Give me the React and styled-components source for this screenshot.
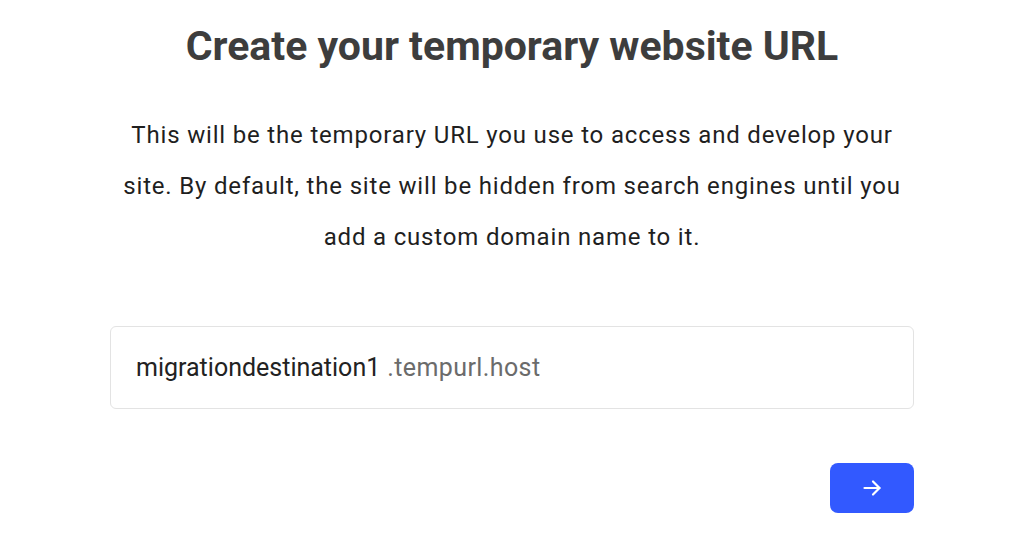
import React from "react";
import styled, { createGlobalStyle } from "styled-components";

const Global = createGlobalStyle`
  html, body { margin: 0; padding: 0; background: #fff; }
  body { font-family: Roboto, "Noto Sans", Arial, sans-serif; -webkit-font-smoothing: antialiased; }
`;

const Page = styled.main`
  width: 804px;
  margin: 0 auto;
  padding-top: 22px;
  display: flex;
  flex-direction: column;
`;

const Title = styled.h1`
  margin: 0;
  text-align: center;
  font-size: 41px;
  line-height: 48px;
  font-weight: 700;
  color: #3d3d3d;
`;

const Lead = styled.p`
  margin: 40px 0 0;
  text-align: center;
  font-size: 24px;
  line-height: 51px;
  letter-spacing: 0.82px;
  color: #1f1f1f;
`;

const Field = styled.div`
  margin-top: 63px;
  height: 83px;
  box-sizing: border-box;
  border: 1px solid #e3e3e3;
  border-radius: 6px;
  display: flex;
  align-items: center;
  padding: 0 25px;
  font-size: 25px;
`;

const Sub = styled.span`
  color: #222;
`;

const Suffix = styled.span`
  color: #6b6b6b;
  margin-left: 7px;
  letter-spacing: 0.4px;
`;

const Actions = styled.div`
  margin-top: 54px;
  display: flex;
  justify-content: flex-end;
`;

const NextButton = styled.button`
  width: 84px;
  height: 50px;
  border: none;
  border-radius: 8px;
  background: #3259ff;
  color: #fff;
  display: flex;
  align-items: center;
  justify-content: center;
  cursor: pointer;
  padding: 0;
`;

export default function App() {
  return (
    <>
      <Global />
      <Page>
        <Title>Create your temporary website URL</Title>
        <Lead>
          This will be the temporary URL you use to access and develop your site. By default, the site will be hidden from search engines until you add a custom domain name to it.
        </Lead>
        <Field>
          <Sub>migrationdestination1</Sub>
          <Suffix>.tempurl.host</Suffix>
        </Field>
        <Actions>
          <NextButton aria-label="Next">
            <svg width="20" height="20" viewBox="0 0 20 20" fill="none" stroke="#fff" strokeWidth="2.2" strokeLinecap="round" strokeLinejoin="round">
              <path d="M2.5 10H17.5" />
              <path d="M11 3.5L17.5 10L11 16.5" />
            </svg>
          </NextButton>
        </Actions>
      </Page>
    </>
  );
}
